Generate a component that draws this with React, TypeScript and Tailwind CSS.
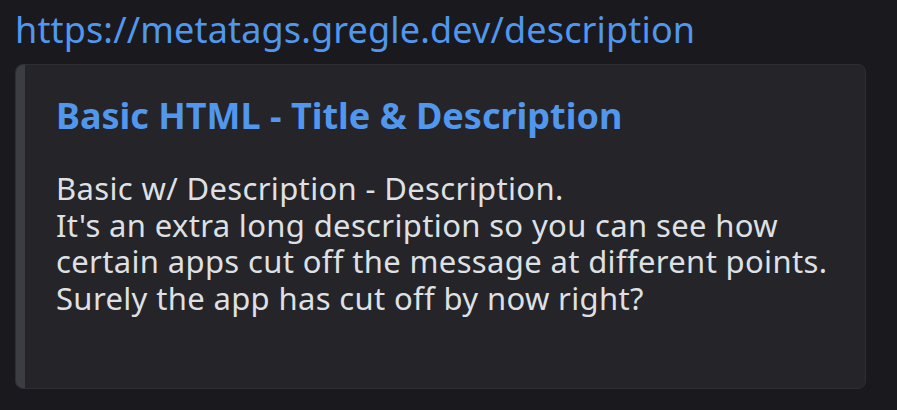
export default function App() {
  return (
    <div className="min-h-[410px] w-[897px] bg-[#1a1a1e] pl-[15px] pt-[8px] font-['Noto_Sans',sans-serif]">
      <a className="block text-[36px] leading-[44px] tracking-[0.15px] text-[#5197ed]">
        https://metatags.gregle.dev/description
      </a>
      <div className="mt-[12px] flex w-[851px] overflow-hidden rounded-[8px] border border-[#2e2e34] bg-[#242429]">
        <div className="w-[9px] shrink-0 bg-[#3c3c43]" />
        <div className="flex flex-col pb-[72px] pl-[31px] pr-[32px] pt-[29px]">
          <div className="whitespace-nowrap text-[36px] font-bold leading-[44px] text-[#5197ed]">
            Basic HTML - Title &amp; Description
          </div>
          <div className="mt-[32px] whitespace-nowrap text-[31px] leading-[36.5px] tracking-[0.35px] text-[#dfe0e3]">
            Basic w/ Description - Description.
            <br />
            It's an extra long description so you can see how
            <br />
            certain apps cut off the message at different points.
            <br />
            Surely the app has cut off by now right?
          </div>
        </div>
      </div>
    </div>
  );
}
